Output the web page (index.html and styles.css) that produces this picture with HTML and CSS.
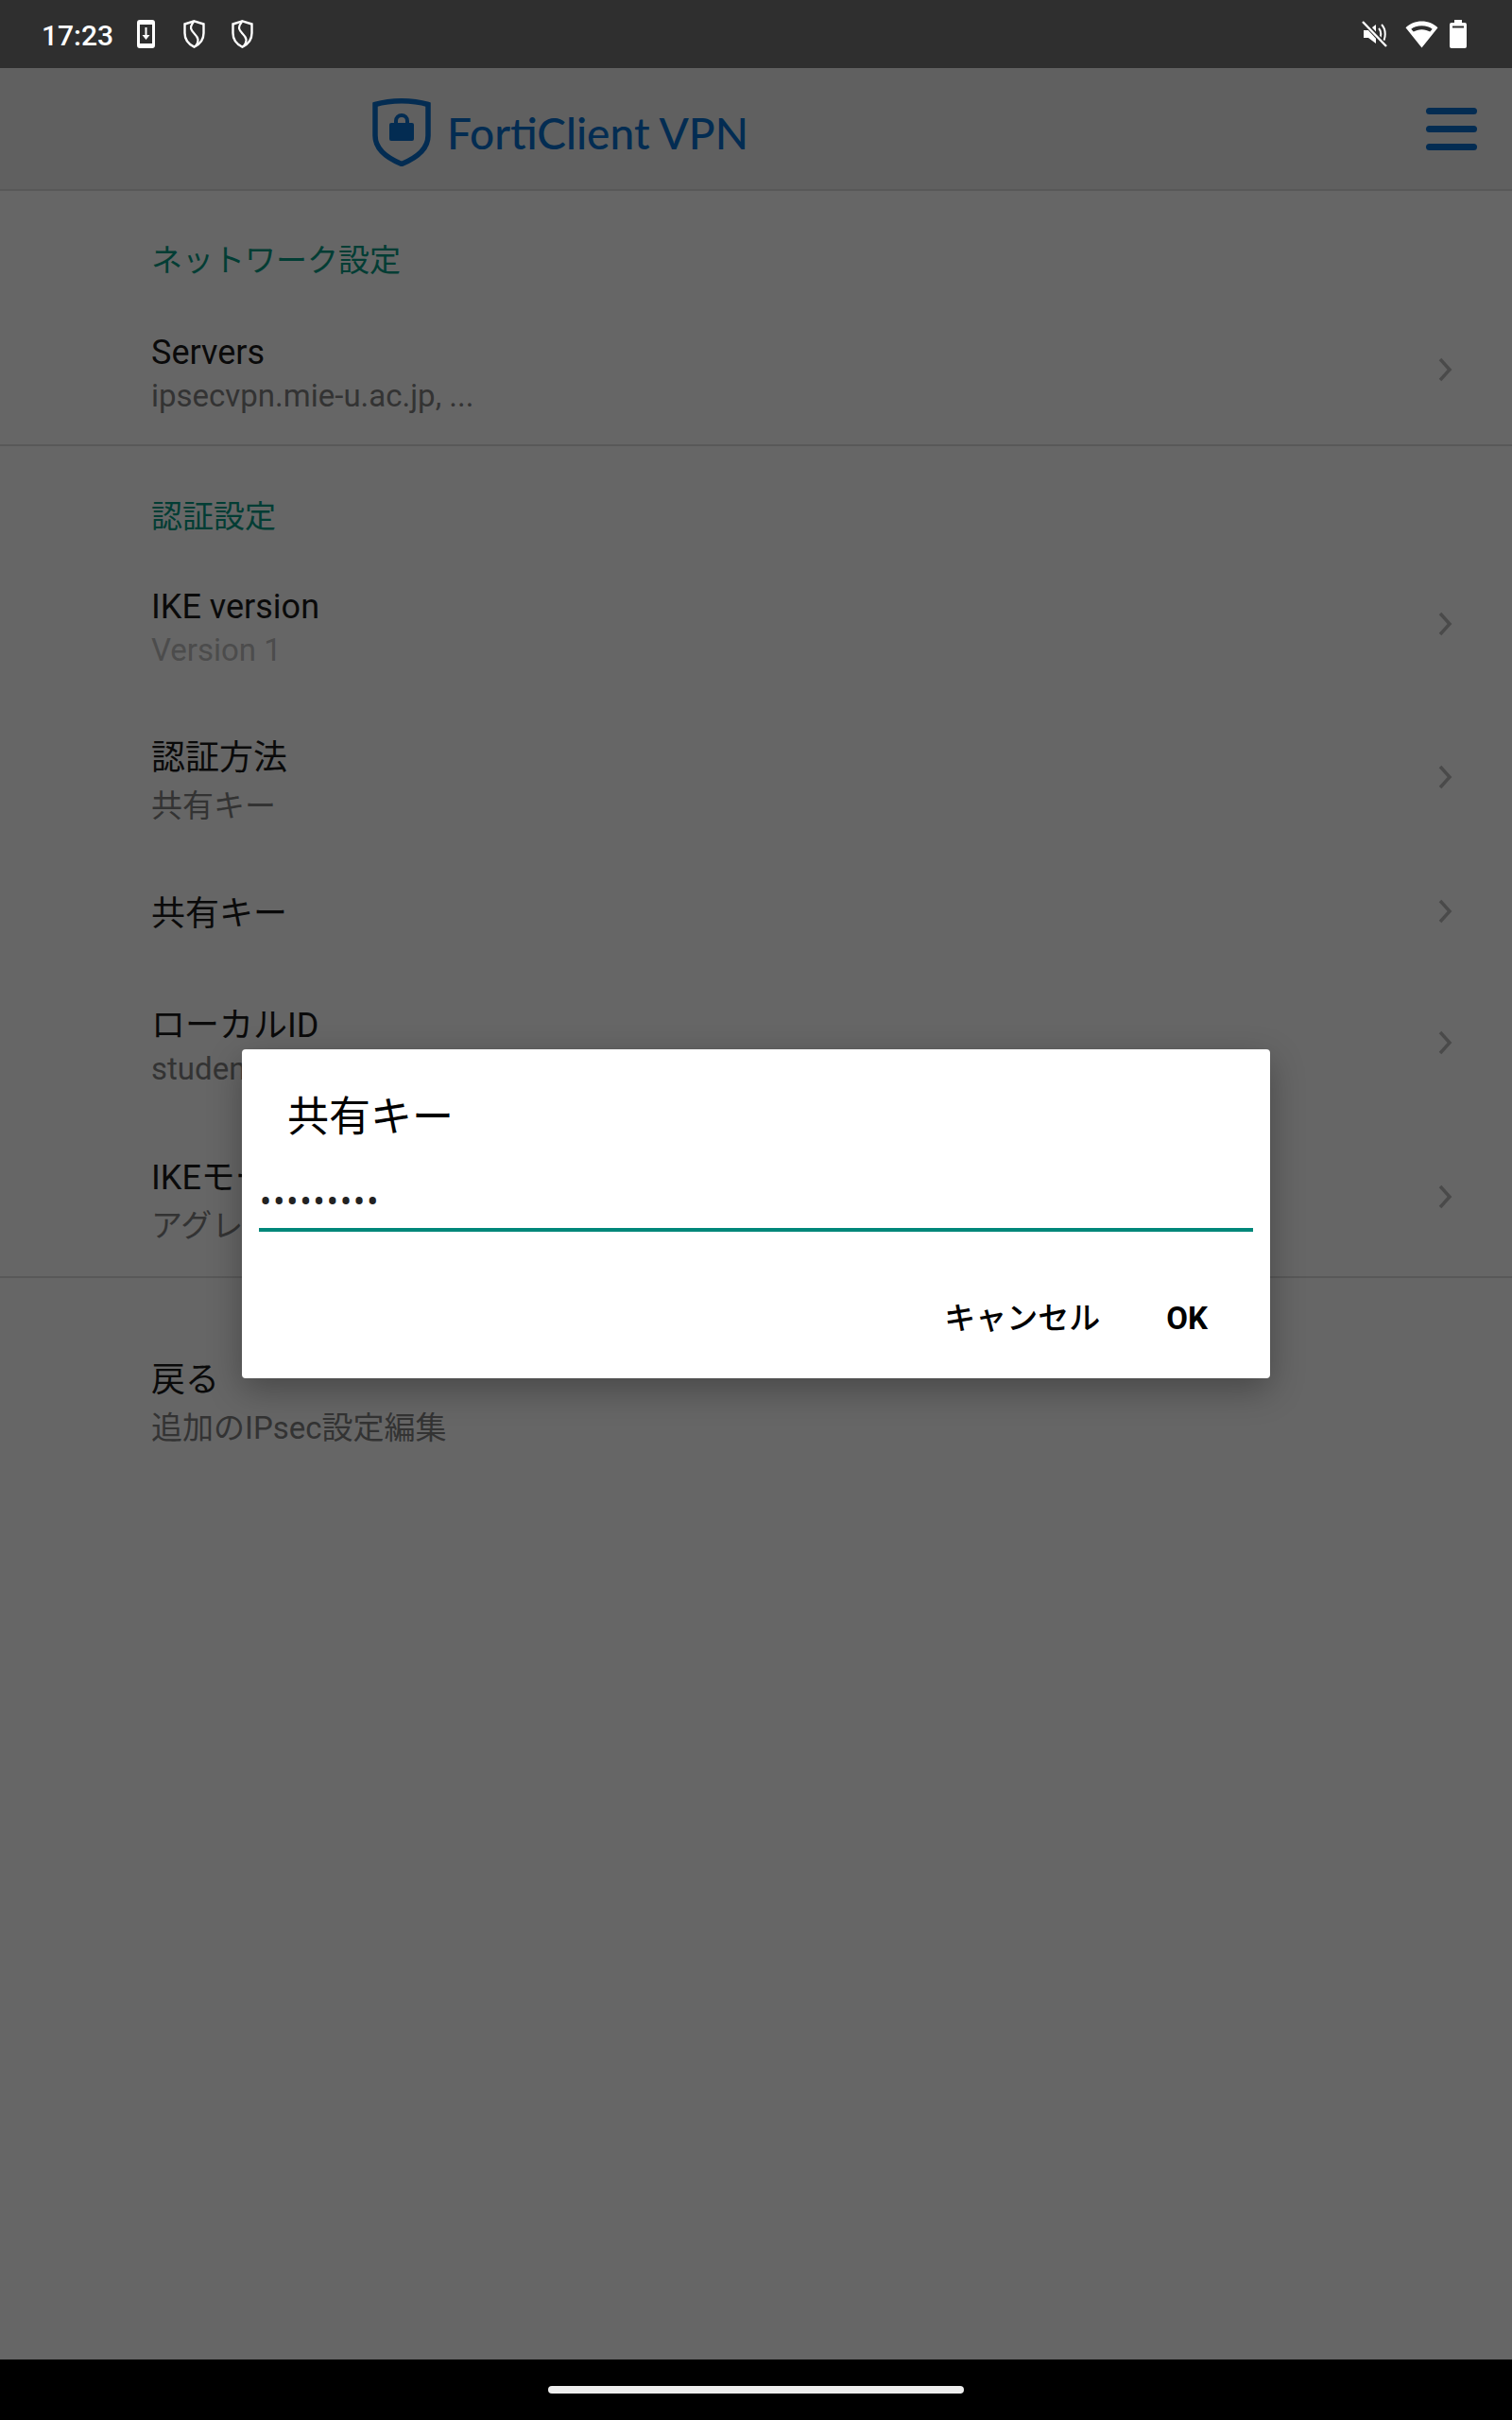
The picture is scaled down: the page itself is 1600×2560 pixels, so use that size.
FILE: index.html
```html
<!DOCTYPE html>
<html lang="ja">
<head>
    <meta charset="UTF-8">
    <meta name="viewport" content="width=device-width, initial-scale=1.0">
    <title>FortiClient VPN</title>
    <link rel="stylesheet" href="styles.css">
</head>
<body>

<div class="statusbar">
    <div class="status-left">
        <span class="clock">17:23</span>
        <svg class="st-download" width="19" height="30" viewBox="0 0 19 30"><path fill="#fff" fill-rule="evenodd" d="M3 0h13a3 3 0 0 1 3 3v24a3 3 0 0 1-3 3H3a3 3 0 0 1-3-3V3a3 3 0 0 1 3-3zM3 5v20h13V5z"/><path fill="#fff" d="M8.500 8h2v8h3l-4 5-4-5h3z"/></svg>
        <svg class="st-shield" width="23" height="30" viewBox="0 0 23 30"><path fill="none" stroke="#fff" stroke-width="2.400" d="M11.500 1.300L21.500 4.500V14c0 7-4.500 12-10 14.600C6 26 1.500 21 1.500 14V4.500z"/><path fill="none" stroke="#fff" stroke-width="2.200" d="M11 2C6 8 8 11 12 15c4 4 5 7 1 13"/></svg>
        <svg class="st-shield second" width="23" height="30" viewBox="0 0 23 30"><path fill="none" stroke="#fff" stroke-width="2.400" d="M11.500 1.300L21.500 4.500V14c0 7-4.500 12-10 14.600C6 26 1.500 21 1.500 14V4.500z"/><path fill="none" stroke="#fff" stroke-width="2.200" d="M11 2C6 8 8 11 12 15c4 4 5 7 1 13"/></svg>
    </div>
    <div class="status-right">
        <svg width="27" height="28" viewBox="0 0 27 28"><path fill="#fff" d="M2 10h5l8-6v20l-8-6H2z"/><path fill="none" stroke="#fff" stroke-width="2" d="M18 8c3 3 3 9 0 12M21 4c5 5 5 15 0 20"/><path stroke="#2f2f2f" stroke-width="5" d="M2 1l24 26"/><path stroke="#fff" stroke-width="2.400" d="M1 1l25 26"/></svg>
        <svg class="wifi" width="35" height="29" viewBox="0 0 36 29"><path fill="#fff" fill-rule="evenodd" d="M18 0c7 0 13 2.500 17.500 7L18 29 .5 7C5 2.500 11 0 18 0zm0 5C13 5 9 6.500 6.500 8.500L9 11.500C11.500 10 14.500 9 18 9s6.500 1 9 2.500l2.500-3C27 6.500 23 5 18 5z"/></svg>
        <svg class="battery" width="18" height="30" viewBox="0 0 18 30"><path fill="#fff" fill-rule="evenodd" d="M5 0h8v3h3a2 2 0 0 1 2 2v23a2 2 0 0 1-2 2H2a2 2 0 0 1-2-2V5a2 2 0 0 1 2-2h3zM3 6.500v2h12v-2z"/></svg>
    </div>
</div>

<div class="app">
    <header class="appbar">
        <div class="logo">
            <svg width="62" height="72" viewBox="0 0 62 72"><path fill="none" stroke="#032c52" stroke-width="5.500" stroke-linejoin="miter" d="M3 6.500C20 1.500 42 1.500 59 6.500v33c0 13-11 23-28 30C14 62.500 3 52.500 3 39.500z"/><path fill="none" stroke="#032c52" stroke-width="4" d="M25 28v-4a6 6 0 0 1 12 0v4"/><rect x="18" y="26" width="26" height="19" rx="2" fill="#032c52"/></svg>
            <span class="logo-text">FortiClient VPN</span>
        </div>
        <div class="menu-btn"><i></i><i></i><i></i></div>
    </header>

    <section class="group">
        <h2 class="group-title title-net">ネットワーク設定</h2>
        <div class="row row-servers">
            <div class="row-text"><div class="row-title">Servers</div><div class="row-sub">ipsecvpn.mie-u.ac.jp, ...</div></div>
            <svg class="chev" width="16" height="26" viewBox="0 0 16 26"><path fill="none" stroke="#4a4a4a" stroke-width="3.500" d="M3 2l10 11L3 24"/></svg>
        </div>
    </section>

    <section class="group">
        <h2 class="group-title">認証設定</h2>
        <div class="row row-ike">
            <div class="row-text"><div class="row-title">IKE version</div><div class="row-sub dim">Version 1</div></div>
            <svg class="chev" width="16" height="26" viewBox="0 0 16 26"><path fill="none" stroke="#4a4a4a" stroke-width="3.500" d="M3 2l10 11L3 24"/></svg>
        </div>
        <div class="row row-method">
            <div class="row-text"><div class="row-title">認証方法</div><div class="row-sub cjk">共有キー</div></div>
            <svg class="chev" width="16" height="26" viewBox="0 0 16 26"><path fill="none" stroke="#4a4a4a" stroke-width="3.500" d="M3 2l10 11L3 24"/></svg>
        </div>
        <div class="row row-key">
            <div class="row-text single"><div class="row-title">共有キー</div></div>
            <svg class="chev" width="16" height="26" viewBox="0 0 16 26"><path fill="none" stroke="#4a4a4a" stroke-width="3.500" d="M3 2l10 11L3 24"/></svg>
        </div>
        <div class="row row-local">
            <div class="row-text"><div class="row-title">ローカルID</div><div class="row-sub">student</div></div>
            <svg class="chev" width="16" height="26" viewBox="0 0 16 26"><path fill="none" stroke="#4a4a4a" stroke-width="3.500" d="M3 2l10 11L3 24"/></svg>
        </div>
        <div class="row row-mode">
            <div class="row-text low"><div class="row-title">IKEモード</div><div class="row-sub cjk">アグレッシブ</div></div>
            <svg class="chev" width="16" height="26" viewBox="0 0 16 26"><path fill="none" stroke="#4a4a4a" stroke-width="3.500" d="M3 2l10 11L3 24"/></svg>
        </div>
    </section>

    <section class="group group-back">
        <div class="row-title">戻る</div>
        <div class="row-sub cjk">追加のIPsec設定編集</div>
    </section>
</div>

<div class="navbar"><div class="nav-pill"></div></div>

<div class="dialog">
    <div class="dialog-title">共有キー</div>
    <div class="dialog-input">•••••••••</div>
    <div class="dialog-actions">
        <span class="dialog-btn cancel">キャンセル</span>
        <span class="dialog-btn">OK</span>
    </div>
</div>

</body>
</html>
```

FILE: styles.css
```css
body {
    margin: 0;
    width: 1600px;
    height: 2560px;
    display: flex;
    flex-direction: column;
    background-color: #666;
    font-family: Roboto, "Noto Sans CJK JP", sans-serif;
    overflow: hidden;
}
.statusbar {
    height: 72px;
    flex-shrink: 0;
    background-color: #2f2f2f;
    display: flex;
    justify-content: space-between;
    align-items: center;
    padding: 0 48px 0 44px;
    color: #fff;
}
.status-left, .status-right {
    display: flex;
    align-items: center;
}
.status-right {
    padding-right: 0;
}
.clock {
    font-size: 30px;
    font-weight: 500;
    margin-right: 25px;
    padding-top: 2px;
}
.st-shield {
    margin-left: 30px;
}
.st-shield.second {
    margin-left: 28px;
}
.wifi {
    margin-left: 19px;
}
.battery {
    margin-left: 12px;
}
.app {
    flex: 1;
}
.appbar {
    height: 130px;
    box-sizing: border-box;
    display: flex;
    align-items: center;
    justify-content: space-between;
    padding-left: 394px;
    padding-right: 37px;
    background-color: #606060;
    border-bottom: 2px solid #585858;
}
.logo {
    display: flex;
    align-items: center;
    gap: 17px;
    padding-top: 8px;
}
.logo-text {
    font-family: Lato, sans-serif;
    font-size: 46px;
    font-weight: 500;
    color: #032c52;
}
.menu-btn {
    width: 54px;
    display: flex;
    flex-direction: column;
    gap: 12px;
}
.menu-btn i {
    display: block;
    height: 7px;
    border-radius: 4px;
    background-color: #032c52;
}
.group {
    padding-left: 160px;
    border-bottom: 2px solid #585858;
}
.group-back {
    border-bottom: none;
    padding-top: 84px;
}
.group-title {
    margin: 0;
    padding-top: 52px;
    font-size: 33px;
    line-height: 46px;
    font-weight: 400;
    color: #023d34;
}
.title-net {
    padding-top: 51px;
}
.row {
    display: flex;
    justify-content: space-between;
    align-items: center;
    padding-right: 63px;
}
.row-servers {
    height: 159px;
    margin-top: 12px;
}
.row-ike {
    height: 160px;
    margin-top: 10px;
}
.row-method {
    height: 164px;
}
.row-key {
    height: 120px;
}
.row-local {
    height: 158px;
}
.row-mode {
    height: 168px;
}
/* the text sits a little below the chevron's centre line */
.row-text {
    margin-top: 8px;
}
.row-text.single {
    margin-top: 6px;
}
.row-text.low {
    margin-top: 9px;
}
.row-title {
    font-size: 36px;
    line-height: 48px;
    color: #0a0a0a;
}
.row-sub {
    font-size: 33px;
    line-height: 44px;
    color: #333;
}
.row-sub.dim {
    color: #4c4c4c;
}
.row-sub.cjk {
    margin-top: 5px;
}
.navbar {
    height: 64px;
    flex-shrink: 0;
    background-color: #000;
    display: flex;
    align-items: center;
    justify-content: center;
}
.nav-pill {
    width: 440px;
    height: 8px;
    border-radius: 4px;
    background-color: #eee;
}
/* sits over the list */
.dialog {
    position: absolute;
    left: 256px;
    top: 1110px;
    width: 1088px;
    height: 348px;
    box-sizing: border-box;
    background-color: #fff;
    border-radius: 4px;
    box-shadow: 0 12px 36px rgba(0,0,0,0.3);
    padding: 0 18px;
}
.dialog-title {
    font-size: 44px;
    line-height: 56px;
    padding: 44px 0 0 30px;
    color: #000;
}
.dialog-input {
    margin-top: 24px;
    padding: 12px 0 0 1px;
    height: 53px;
    line-height: 53px;
    font-size: 36px;
    letter-spacing: 2px;
    border-bottom: 4px solid #00877a;
    color: #222;
}
.dialog-actions {
    display: flex;
    justify-content: flex-end;
    align-items: center;
    gap: 70px;
    height: 60px;
    padding: 62px 48px 0 0;
}
.dialog-btn {
    font-size: 33px;
    line-height: 60px;
    font-weight: 700;
    color: #000;
}
.dialog-btn.cancel {
    font-weight: 500;
}
```
